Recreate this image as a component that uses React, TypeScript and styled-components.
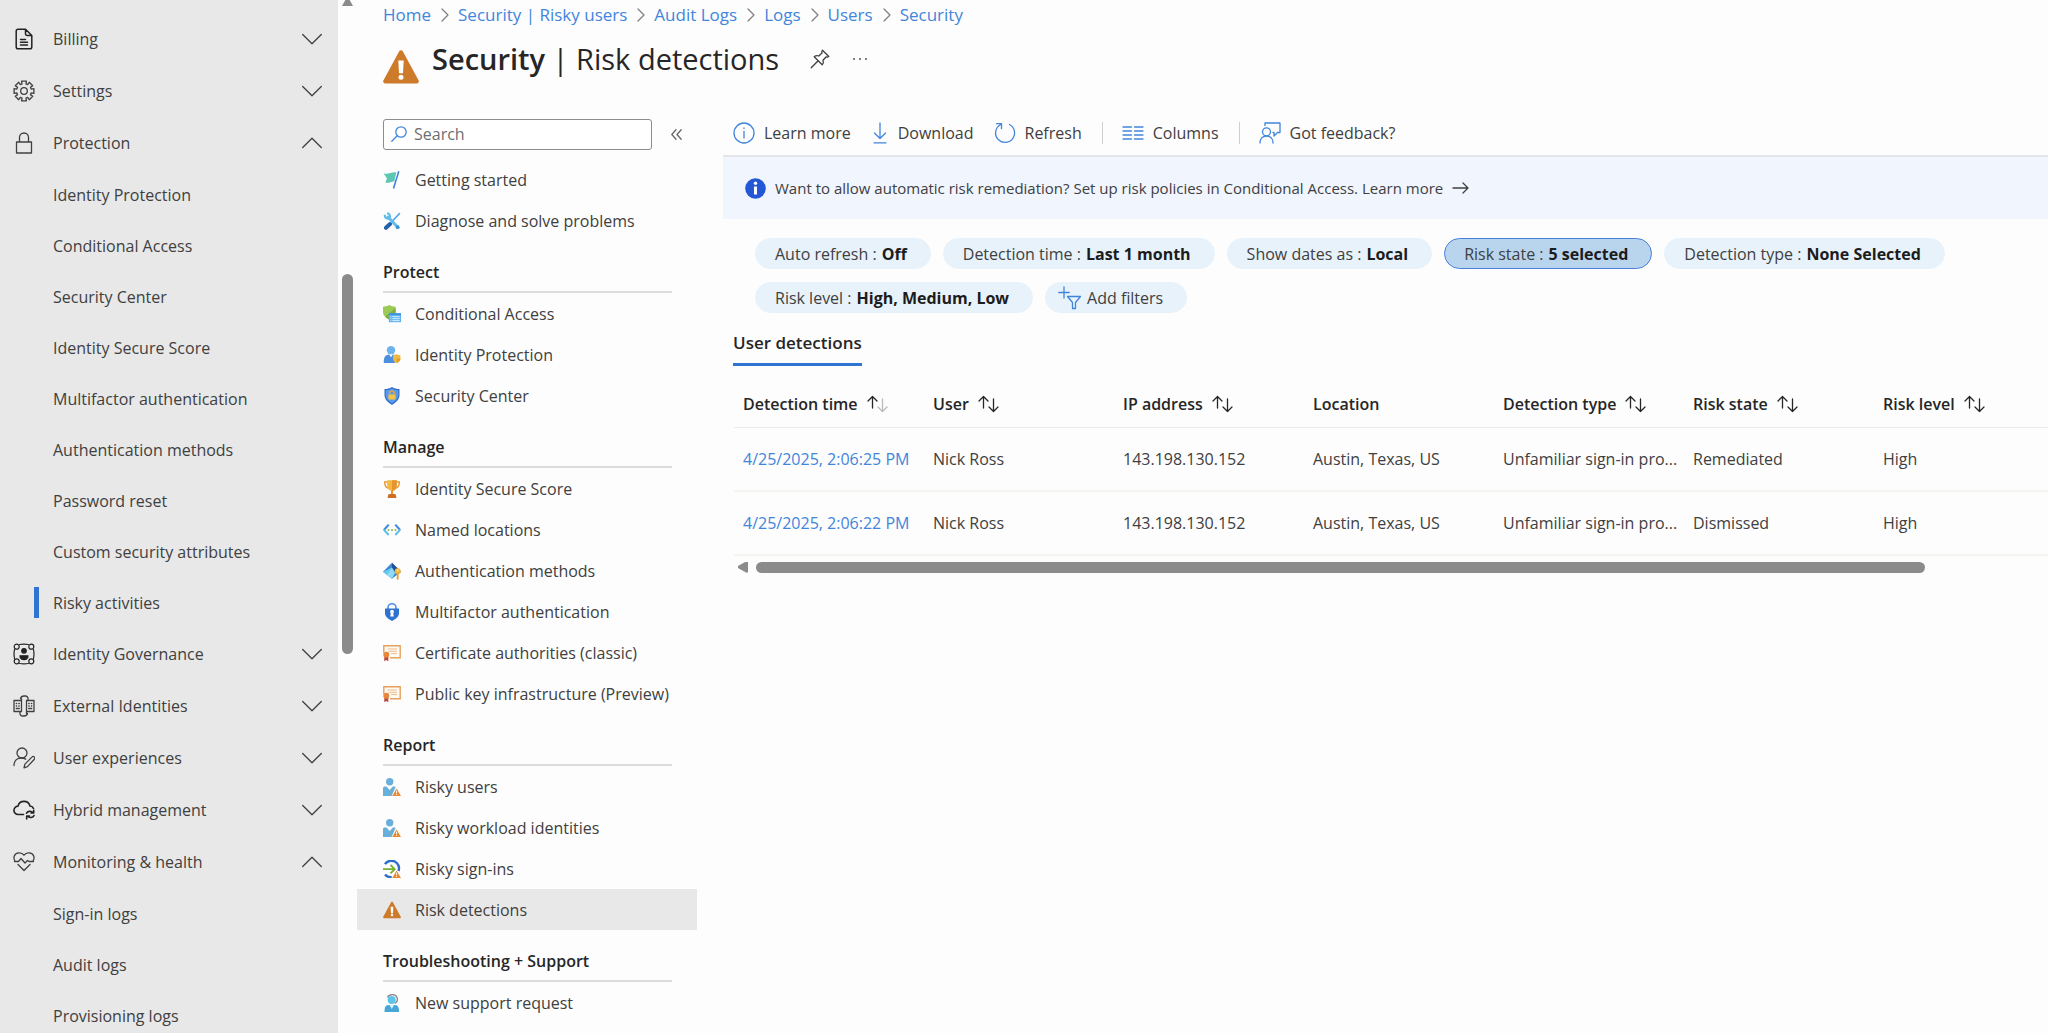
import React from 'react';
import styled, { createGlobalStyle, css } from 'styled-components';

const colors = {
  text: '#404040',
  heading: '#262626',
  link: '#4285dc',
  accent: '#2f74d0',
  rail: '#e8e8e8',
  line: '#dcdcdf',
  thumb: '#8b8b8b',
  pill: '#e7f2fb',
  pillActive: '#b9d5ee',
  notice: '#f0f5fe',
};

const GlobalStyle = createGlobalStyle`
  *, *::before, *::after { box-sizing: border-box; }
  body {
    margin: 0;
    overflow: hidden;
    background: #fdfdfd;
    color: ${colors.text};
    font-family: "Open Sans", "Noto Sans", sans-serif;
    font-size: 16px;
    line-height: 24px;
  }
  button, input { font: inherit; color: inherit; }
  ul, ol { list-style: none; margin: 0; padding: 0; }
  a { color: inherit; text-decoration: none; }
`;

const resetButton = css`
  border: 0;
  padding: 0;
  background: none;
  cursor: pointer;
`;

/* ---------- page frame ---------- */

const Page = styled.div`
  display: flex;
  height: 100vh;
  overflow: hidden;
`;

const Rail = styled.nav`
  flex: 0 0 338px;
  padding-top: 13px;
  overflow: hidden;
  background: ${colors.rail};
`;

const RailScroll = styled.div`
  flex: 0 0 19px;
  display: flex;
  flex-direction: column;
  padding-left: 4px;
  overflow: hidden;
`;

const UpArrow = styled.span`
  width: 11px;
  height: 6px;
  background: ${colors.thumb};
  clip-path: polygon(30% 0, 70% 0, 100% 100%, 0 100%);
`;

const Spacer = styled.span<{ $share: number }>`
  flex: ${(p) => p.$share};
`;

const RailThumb = styled(Spacer)`
  width: 11px;
  border-radius: 6px;
  background: ${colors.thumb};
`;

const Blade = styled.div`
  flex: 1;
  min-width: 0;
  display: flex;
  flex-direction: column;
`;

/* ---------- left rail ---------- */

const RailGroup = styled.button`
  ${resetButton}
  display: flex;
  align-items: center;
  width: 100%;
  height: 52px;
  padding: 0 16px 0 13px;
  text-align: left;
`;

const RailLabel = styled.span`
  flex: 1;
  padding-left: 18px;
`;

const RailLink = styled.a<{ $active?: boolean }>`
  display: flex;
  align-items: center;
  height: 51px;
  padding-left: 34px;

  &::before {
    content: '';
    width: 5px;
    height: 31px;
    margin-right: 14px;
    background: ${(p) => (p.$active ? colors.accent : 'transparent')};
  }
`;

/* ---------- header ---------- */

const Header = styled.header`
  padding: 3px 26px 0;
  height: 119px;
`;

const Crumbs = styled.ol`
  display: flex;
  align-items: center;
  color: ${colors.link};
  font-size: 17px;
`;

const Crumb = styled.li`
  display: flex;
  align-items: center;
`;

const TitleRow = styled.div`
  display: flex;
  align-items: center;
  margin-top: 6px;
`;

const TitleIcon = styled.span`
  display: flex;
  padding-top: 16px;
  margin-right: 13px;
`;

const Title = styled.h1`
  margin: 0 31px 0 0;
  color: ${colors.heading};
  font-size: 29px;
  line-height: 44px;
  font-weight: 400;

  strong { font-weight: 600; }
`;

const TitleActions = styled.div`
  display: flex;
  align-items: center;
  gap: 22px;
`;

const IconButton = styled.button`
  ${resetButton}
  display: flex;
  align-items: center;
`;

/* ---------- resource menu ---------- */

const Body = styled.div`
  display: flex;
  flex: 1;
  min-height: 0;
`;

const Menu = styled.nav`
  flex: 0 0 340px;
`;

const SearchRow = styled.form`
  display: flex;
  align-items: center;
  gap: 19px;
  height: 30px;
  padding: 0 15px 0 26px;
  margin-bottom: 10px;
`;

const SearchBox = styled.label`
  display: flex;
  flex: 1;
  align-items: center;
  gap: 7px;
  height: 31px;
  padding: 0 7px;
  border: 1px solid #8c8c8c;
  border-radius: 3px;
  background: #fff;
`;

const SearchInput = styled.input`
  flex: 1;
  min-width: 0;
  border: 0;
  padding: 0;
  outline: 0;
  background: none;

  &::placeholder { color: #6e6e6e; opacity: 1; }
`;

const MenuHeading = styled.h2`
  height: 52px;
  margin: 0 25px 0 26px;
  padding-top: 19px;
  border-bottom: 2px solid ${colors.line};
  color: ${colors.heading};
  font-size: 16px;
  line-height: 24px;
  font-weight: 600;
`;

const MenuLink = styled.a<{ $active?: boolean }>`
  display: flex;
  align-items: center;
  gap: 14px;
  height: 41px;
  padding-left: 26px;
  white-space: nowrap;
  background: ${(p) => (p.$active ? colors.rail : 'none')};
`;

/* ---------- work area ---------- */

const Work = styled.main`
  flex: 1;
  min-width: 0;
  padding-left: 26px;
`;

const Toolbar = styled.div`
  display: flex;
  align-items: center;
  height: 38px;
  padding: 0 0 8px 10px;
  border-bottom: 2px solid #e4e5e9;
`;

const Tool = styled.button`
  ${resetButton}
  display: flex;
  align-items: center;
  gap: 9px;
  margin-right: 20px;
`;

const ToolDivider = styled.span`
  width: 1px;
  height: 22px;
  margin-right: 19px;
  background: #cfcfcf;
`;

const Notice = styled.a`
  display: flex;
  align-items: center;
  gap: 9px;
  height: 62px;
  padding: 0 22px;
  background: ${colors.notice};
  font-size: 15px;
`;

const Filters = styled.div`
  display: flex;
  flex-wrap: wrap;
  gap: 13px 12px;
  padding: 19px 32px;
`;

const Pill = styled.button<{ $tight?: boolean; $active?: boolean }>`
  ${resetButton}
  display: flex;
  align-items: center;
  gap: 5px;
  height: 31px;
  padding: ${(p) => (p.$tight ? '0 23px 0 12px' : '0 23px 0 19px')};
  border: 1px solid ${(p) => (p.$active ? '#4a80dc' : colors.pill)};
  border-radius: 16px;
  background: ${(p) => (p.$active ? colors.pillActive : colors.pill)};
  white-space: nowrap;

  strong { color: #1c1c1c; font-weight: 700; }
`;

const Tabs = styled.div`
  display: flex;
  padding-left: 10px;
`;

const Tab = styled.button`
  ${resetButton}
  height: 34px;
  padding-bottom: 10px;
  margin-bottom: 15px;
  border-bottom: 3px solid ${colors.accent};
  color: ${colors.heading};
  font-size: 17px;
  line-height: 20px;
  font-weight: 600;
`;

const TableFrame = styled.div`
  margin-left: 11px;
  overflow: hidden;
`;

const Table = styled.table`
  width: 1330px;
  min-width: 100%;
  table-layout: fixed;
  border-collapse: collapse;
`;

const Column = styled.col`
  width: 190px;
`;

const Th = styled.th`
  height: 46px;
  padding: 0 4px 0 9px;
  border-bottom: 1px solid #ebebeb;
  color: ${colors.heading};
  font-weight: 600;
  text-align: left;
  white-space: nowrap;
`;

const SortButton = styled.button`
  ${resetButton}
  display: flex;
  align-items: center;
  gap: 9px;
`;

const Td = styled.td`
  height: 64px;
  padding: 0 4px 0 9px;
  overflow: hidden;
  border-bottom: 2px solid #f4f4f1;
  text-overflow: ellipsis;
  white-space: nowrap;
`;

const RowLink = styled.a`
  color: ${colors.link};
`;

const TableScroll = styled.div`
  display: flex;
  align-items: center;
  height: 22px;
  padding-left: 15px;
`;

const LeftArrow = styled.span`
  width: 10px;
  height: 11px;
  margin-right: 8px;
  background: ${colors.thumb};
  clip-path: polygon(0 40%, 80% 0, 100% 0, 100% 100%, 80% 100%, 0 60%);
`;

const TableThumb = styled(Spacer)`
  height: 11px;
  border-radius: 6px;
  background: ${colors.thumb};
`;

/* ---------- icons ---------- */

const Line = styled.svg`
  flex: none;
  fill: none;
  stroke: currentColor;
  stroke-width: 1.3;
  stroke-linecap: round;
  stroke-linejoin: round;
`;

const BlueLine = styled(Line)`
  color: ${colors.link};
`;

const Art = styled.svg`
  flex: none;
`;

const RailIcon = ({ children }: { children: React.ReactNode }) => (
  <Line width="22" height="22" viewBox="0 0 22 22">{children}</Line>
);

const Chevron = ({ open }: { open?: boolean }) => (
  <Line width="20" height="12" viewBox="0 0 20 12">
    <path d={open ? 'M.7 10.5 10 1.2l9.3 9.3' : 'M.7 1.5 10 10.8l9.3-9.3'} />
  </Line>
);

const gearPath = (() => {
  const pts: string[] = [];
  for (let i = 0; i < 8; i++) {
    const base = (i * Math.PI) / 4;
    [[-0.27, 7.4], [-0.24, 10.2], [0.24, 10.2], [0.27, 7.4]].forEach(([a, r]) => {
      pts.push(`${(11 + r * Math.sin(base + a)).toFixed(2)} ${(11 - r * Math.cos(base + a)).toFixed(2)}`);
    });
  }
  return `M${pts.join('L')}Z`;
})();

const railIcons: Record<string, React.ReactNode> = {
  billing: (
    <RailIcon>
      <g stroke="#222" strokeWidth="1.5">
        <path d="M12.5 1.2H5A1.8 1.8 0 0 0 3.2 3v16A1.8 1.8 0 0 0 5 20.800h12a1.800 1.800 0 0 0 1.800-1.800V7.500zM12.500 1.200v4.500a1.800 1.800 0 0 0 1.800 1.800h4.500M7.500 11.500h5M7.500 14.300h7M7.500 17h7" />
      </g>
    </RailIcon>
  ),
  settings: <RailIcon><path d={gearPath} /><circle cx="11" cy="11" r="3.300" /></RailIcon>,
  lock: <RailIcon><path d="M3.500 10h15v11h-15zM6.500 10V5.500a4.500 4.500 0 0 1 9 0V10" /></RailIcon>,
  governance: (
    <RailIcon>
      <g stroke="#222" strokeWidth="1.200">
        <path d="M6.500 1.500Q11 .6 15.500 1.500M6.500 20.500Q11 21.400 15.500 20.500M1.500 6.500Q.6 11 1.500 15.500M20.500 6.500Q21.400 11 20.500 15.500" />
        <circle cx="3.700" cy="3.700" r="2.500" /><circle cx="18.300" cy="3.700" r="2.500" />
        <circle cx="3.700" cy="18.300" r="2.500" /><circle cx="18.300" cy="18.300" r="2.500" />
        <circle cx="11" cy="7.800" r="2.300" fill="#222" />
        <path d="M7 12.800h8c0 2.600-1.600 3.800-4 3.800s-4-1.200-4-3.800z" fill="#222" />
      </g>
    </RailIcon>
  ),
  external: (
    <RailIcon>
      <path d="M1 5.500h7.500v11H1zM13.500 5.500H21v11h-7.500zM7.500 3.500C8 1.700 9.500 1 11 1h1.500a2.500 2.500 0 0 1 2.500 2.500v2M7 16.500v2A2.500 2.500 0 0 0 9.500 21H11c1.500 0 3-.7 3.500-2.500M8.500 5.500V3.800M13.500 16.500v2" />
      <path strokeWidth="1.500" d="M3.300 8.500h.3M5.900 8.500h.3M3.300 11h.3M5.900 11h.3M3.300 13.500h2.900M15.800 8.500h.3M18.400 8.500h.3M15.800 11h.3M18.400 11h.3M15.800 13.500h2.900" />
    </RailIcon>
  ),
  experiences: (
    <RailIcon>
      <circle cx="9" cy="6" r="5" />
      <path d="M1 18.500C1 14 4 11 8.500 11c1.600 0 3 .4 4.200 1.100M11 20.800l.9-3.700 7-7a1.600 1.600 0 0 1 2.500 2.200l-7 7.300z" />
    </RailIcon>
  ),
  hybrid: (
    <RailIcon>
      <g stroke="#222" strokeWidth="1.600">
        <path d="M10.500 15.500H5.300A4.200 4.200 0 0 1 5 7.100 6.200 6.200 0 0 1 17 7c1.700.2 3 1 3.500 2.500" />
        <path d="M13.500 14.200c.8-2 4.500-2.800 6.500-.4M20.700 11.300V14h-2.700M21 16.500c-.8 2.200-4.500 3-6.500.6M13.700 20v-3h2.800" />
      </g>
    </RailIcon>
  ),
  health: (
    <RailIcon>
      <path d="M11 4.200C8.500.8 2.800 1.300 1.300 5c-.7 1.700-.3 3.500.7 5M11 4.200c2.500-3.400 8.200-2.900 9.700.8.700 1.700.3 3.500-.7 5M5 13.500l6 6 6-6M1.500 10.500h4L8 7.500l4 4.500 2.500-2.500 1.500 1h4.500" />
    </RailIcon>
  ),
};

const Warning = ({ size }: { size: number }) => (
  <Art width={size} height={size} viewBox="0 0 36 36">
    <path fill="#cd7a2b" d="M16.200 2.300a2.100 2.100 0 0 1 3.600 0l15.700 29a2.200 2.200 0 0 1-1.900 3.300H2.400a2.200 2.200 0 0 1-1.900-3.300z" />
    <path fill="#fff" d="M15.300 11.500h5.400l-.7 12.800h-4z" />
    <circle cx="18" cy="28.200" r="2.500" fill="#fff" />
  </Art>
);

const Badge = () => (
  <>
    <path fill="#e88b33" d="M13.600 10.400 18 18H9.200z" />
    <path stroke="#fff" strokeWidth="1" d="M13.600 12.700v2.500M13.600 16v.9" />
  </>
);

const RiskyPerson = () => (
  <Art width="18" height="18" viewBox="0 0 18 18">
    <g fill="#6aafd8">
      <circle cx="6.700" cy="3.800" r="3.700" />
      <path d="M0 18V10.500C0 9 .8 8.600 2 8.600h1.500L6.700 12l3.200-3.400h1.600l1.200.4L8.500 18z" />
    </g>
    <Badge />
  </Art>
);

const Certificate = () => (
  <Art width="18" height="18" viewBox="0 0 18 18" fill="none">
    <path stroke="#e5a25c" strokeWidth="1.400" d="M.8 9V1.700h16.400v12H7" fill="#fffaf4" />
    <path stroke="#edb988" d="M4.500 5h9.500M5.500 7.300h8.500M8 9.600h6" />
    <path fill="#b9423a" d="M1.300 12h4v5.300l-2-1.300-2 1.300z" />
    <circle cx="3.300" cy="10.700" r="3" fill="#e8873c" />
  </Art>
);

const menuIcons: Record<string, React.ReactNode> = {
  flag: (
    <Art width="18" height="18" viewBox="0 0 18 18">
      <path fill="#5cc8b4" d="M.5 2.200c4.500 1.600 7-1.200 12.800-.8l-2 9c-3.500-.2-5 2-9 1.200L4 7.500z" />
      <path stroke="#3f7fd8" strokeWidth="1.500" d="M15.800.3 10.500 17.500" />
    </Art>
  ),
  tools: (
    <Art width="18" height="18" viewBox="0 0 18 18" fill="none" strokeLinecap="round">
      <path stroke="#4aa5e2" strokeWidth="1.600" d="M16.500 1.500 9 9.500" />
      <path stroke="#2560ab" strokeWidth="4" d="m7 12-4 3.800" />
      <path stroke="#5fbdea" strokeWidth="3" d="m5 5 9.500 10" />
      <path stroke="#5fbdea" strokeWidth="2.200" d="M1.800 3.500c0 3 2.700 3.700 4.400 2.600 1.500-1.200.8-4-1.200-4.600" />
      <circle cx="14.700" cy="15.200" r="1.900" fill="#3892d4" />
    </Art>
  ),
  conditional: (
    <Art width="18" height="18" viewBox="0 0 18 18">
      <path fill="#9bcb55" d="M6.300 0c2 1.200 4 1.700 6.300 1.700V7c0 3.500-3 6-6.300 7.600C3 13 0 10.500 0 7V1.700C2.300 1.700 4.300 1.200 6.300 0z" />
      <path fill="#7eae3d" d="M12.600 3v4c0 3.500-3 6-6.300 7.600-1.600-.8-3-1.700-4.200-2.800z" />
      <path fill="#5fb2ee" d="M5.800 8.300H18v8.900H5.800z" />
      <path fill="#3d8fdf" d="M5.800 8.300H18v1.600H5.800z" />
      <path stroke="#d5efff" strokeWidth="1" d="M7.300 11.700h1M9.300 11.700h7.400M7.300 13.700h1M9.300 13.700h7.400M7.300 15.600h1M9.300 15.600h7.400" />
    </Art>
  ),
  protection: (
    <Art width="18" height="18" viewBox="0 0 18 18">
      <circle cx="8" cy="4.300" r="4.200" fill="#6db3ee" />
      <path fill="#4c8fde" d="M1 17c-.5 0-.3-4.500 1-6.500C3 9.200 4.500 8.600 6 8.500l2 1.500 2-1.500c2 .2 3 .5 3.700 1.500L12 17z" />
      <path fill="#fff" d="m6.500 8.600 1.500 3 1.500-3z" />
      <path fill="#f3b93b" d="M13.700 8.200c1.200.7 2.300 1 3.700 1v3.300c0 2-1.700 3.600-3.700 4.700-2-1.100-3.700-2.700-3.700-4.700V9.200c1.400 0 2.500-.3 3.700-1z" />
      <path fill="#e39b2c" d="M13.700 12.500h3.700c0 2-1.700 3.600-3.700 4.700z" />
    </Art>
  ),
  center: (
    <Art width="18" height="18" viewBox="0 0 18 18">
      <path fill="#2f6fcb" d="M9 0c2.500 1.600 4.700 2 7.500 2v6.200c0 4.500-4 7.400-7.500 9.800-3.500-2.400-7.500-5.300-7.500-9.800V2C4.300 2 6.500 1.600 9 0z" />
      <path fill="#5a9ae8" d="M9 1.500c2 1.200 4 1.700 6.300 1.700v5c0 3.600-3.200 6-6.300 8.200-3.100-2.200-6.300-4.600-6.300-8.200v-5C5 3.200 7 2.700 9 1.500z" />
      <path fill="#f6c445" d="M5.500 7.500h7v5h-7z" />
      <path fill="none" stroke="#e8a838" strokeWidth="1.300" d="M6.800 7.500V6a2.200 2.200 0 0 1 4.400 0v1.500" />
    </Art>
  ),
  trophy: (
    <Art width="18" height="18" viewBox="0 0 18 18">
      <path fill="none" stroke="#e49a35" strokeWidth="1.400" d="M4.500 2H1.700c0 3.500 1 5.800 4 6.300M13.500 2h2.800c0 3.500-1 5.800-4 6.300" />
      <path fill="#f5b942" d="M4.200.3h9.600v5C13.800 8.600 12 11 9 11S4.200 8.600 4.200 5.300z" />
      <path fill="#e49530" d="M9 .3h4.800v5C13.800 8.600 12 11 9 11zM8 10.500h2V14H8z" />
      <path fill="#cf6f24" d="M5.500 14h7l1 4h-9z" />
    </Art>
  ),
  locations: (
    <Art width="18" height="18" viewBox="0 0 18 18" fill="none" strokeWidth="2">
      <path stroke="#3f83da" d="M5.700 3.700.9 9M12.300 3.700 17.100 9" />
      <path stroke="#5dbfe8" d="m.9 8.800 4.800 5.200M17.100 8.800 12.300 14" />
      <g fill="#84b93c"><circle cx="5.500" cy="9" r="1" /><circle cx="9" cy="9" r="1" /><circle cx="12.500" cy="9" r="1" /></g>
    </Art>
  ),
  methods: (
    <Art width="18" height="18" viewBox="0 0 18 18">
      <path fill="#3d86d2" d="M9 .7 18 9.800l-9 7L0 9.800z" />
      <path fill="#23509a" d="M9 .7 18 9.800l-3.500 2.700L9 6z" />
      <path fill="#67c6ec" d="M9 5.500v11.300L0 9.800z" />
      <path fill="#8cdcf5" d="M9 5.500 12 11l-3 5.800-5-4z" />
      <circle cx="14.700" cy="9.300" r="3" fill="#f3b63a" />
      <path fill="#e9a02f" d="M13.800 11.500h1.800V17l-1 1-.9-1z" />
      <circle cx="14.700" cy="8.300" r=".8" fill="#fff" />
    </Art>
  ),
  mfa: (
    <Art width="18" height="18" viewBox="0 0 18 18">
      <path fill="none" stroke="#4a8fe0" strokeWidth="1.600" d="M5 6V4.500a4 3.700 0 0 1 8 0V6" />
      <path fill="#2f73d0" d="M2 5.500h14v4.700c0 3.600-3.500 6-7 7.800-3.500-1.800-7-4.200-7-7.800z" />
      <circle cx="9" cy="8.700" r="1.900" fill="#fff" />
      <path fill="#fff" d="M8 9.500h2l.8 4H7.200z" />
    </Art>
  ),
  certificate: <Certificate />,
  person: <RiskyPerson />,
  signins: (
    <Art width="18" height="18" viewBox="0 0 18 18" fill="none">
      <path stroke="#2f6dc9" strokeWidth="2.400" d="M2 4.200A7.600 7.600 0 0 1 15.500 11M2 14.500c1.800 2.100 4 2.900 6.700 2.700" />
      <path stroke="#77b032" strokeWidth="1.800" d="M0 9.200h11M7.500 5l4.200 4.200-4.200 4.200" />
      <Badge />
    </Art>
  ),
  warning: <Warning size={18} />,
  support: (
    <Art width="18" height="18" viewBox="0 0 18 18">
      <path fill="none" stroke="#868686" strokeWidth="1.300" d="M4.500 3.500C6-.2 12.500-.4 14 3.500c.8 2 .3 4.500-2 6" />
      <circle cx="8.700" cy="6" r="4" fill="#5cc3ea" />
      <path fill="#45a7d6" d="M1.500 18c0-4 .7-7 4-7h6.500c3.300 0 4 3 4 7z" />
      <path fill="#d8f2fc" d="m6.500 11 2.300 4 2.200-4z" />
    </Art>
  ),
};

const SortArrows = ({ ascending }: { ascending?: boolean }) => (
  <Line width="21" height="18" viewBox="0 0 21 18">
    <path d="M5.500 13V1.500M1 6l4.500-4.500L10 6" />
    <path d="M15.500 4v12.500M11 12l4.500 4.500L20 12" opacity={ascending ? 0.3 : 1} />
  </Line>
);

const tools = {
  info: <BlueLine width="22" height="22" viewBox="0 0 22 22"><circle cx="11" cy="11" r="10" /><path d="M11 9.500V16M11 6v.4" /></BlueLine>,
  download: <BlueLine width="18" height="22" viewBox="0 0 18 22"><path d="M9 1v15.500M3.500 11 9 16.500l5.500-5.500M3 20.800h12" /></BlueLine>,
  refresh: <BlueLine width="22" height="22" viewBox="0 0 22 22"><path d="M15.500 2.500A9.500 9.500 0 1 1 6.300 2.700M2.500 1.700h5v5" /></BlueLine>,
  columns: <BlueLine width="22" height="22" viewBox="0 0 22 22"><path d="M1 5h8.500M1 9h8.500M1 13h8.500M1 17h8.500M12.500 5H21M12.500 9H21M12.500 13H21M12.500 17H21" /></BlueLine>,
  feedback: <BlueLine width="22" height="22" viewBox="0 0 22 22"><circle cx="7.500" cy="9.800" r="4" /><path d="M1 21c0-4 2.500-7 6.500-7s6.500 3 6.500 7M6 3.500V1h15v9.500h-2.500L15 14v-3.500h-1" /></BlueLine>,
};

/* ---------- data ---------- */

type RailEntry = { label: string; icon: string; items?: string[] };

const railEntries: RailEntry[] = [
  { label: 'Billing', icon: 'billing' },
  { label: 'Settings', icon: 'settings' },
  {
    label: 'Protection',
    icon: 'lock',
    items: ['Identity Protection', 'Conditional Access', 'Security Center', 'Identity Secure Score', 'Multifactor authentication', 'Authentication methods', 'Password reset', 'Custom security attributes', 'Risky activities'],
  },
  { label: 'Identity Governance', icon: 'governance' },
  { label: 'External Identities', icon: 'external' },
  { label: 'User experiences', icon: 'experiences' },
  { label: 'Hybrid management', icon: 'hybrid' },
  { label: 'Monitoring & health', icon: 'health', items: ['Sign-in logs', 'Audit logs', 'Provisioning logs'] },
];

const crumbs = ['Home', 'Security | Risky users', 'Audit Logs', 'Logs', 'Users', 'Security'];

const menuSections: { title?: string; items: [string, string][] }[] = [
  { items: [['Getting started', 'flag'], ['Diagnose and solve problems', 'tools']] },
  { title: 'Protect', items: [['Conditional Access', 'conditional'], ['Identity Protection', 'protection'], ['Security Center', 'center']] },
  {
    title: 'Manage',
    items: [['Identity Secure Score', 'trophy'], ['Named locations', 'locations'], ['Authentication methods', 'methods'], ['Multifactor authentication', 'mfa'], ['Certificate authorities (classic)', 'certificate'], ['Public key infrastructure (Preview)', 'certificate']],
  },
  { title: 'Report', items: [['Risky users', 'person'], ['Risky workload identities', 'person'], ['Risky sign-ins', 'signins'], ['Risk detections', 'warning']] },
  { title: 'Troubleshooting + Support', items: [['New support request', 'support']] },
];

const filters = [
  ['Auto refresh', 'Off'],
  ['Detection time', 'Last 1 month'],
  ['Show dates as', 'Local'],
  ['Risk state', '5 selected'],
  ['Detection type', 'None Selected'],
  ['Risk level', 'High, Medium, Low'],
];

const columns = ['Detection time', 'User', 'IP address', 'Location', 'Detection type', 'Risk state', 'Risk level'];

const rows = [
  ['4/25/2025, 2:06:25 PM', 'Nick Ross', '143.198.130.152', 'Austin, Texas, US', 'Unfamiliar sign-in pro...', 'Remediated', 'High'],
  ['4/25/2025, 2:06:22 PM', 'Nick Ross', '143.198.130.152', 'Austin, Texas, US', 'Unfamiliar sign-in pro...', 'Dismissed', 'High'],
];

/* ---------- parts ---------- */

const CrumbArrow = styled(Line)`
  margin: 0 9px 0 10px;
  color: #808080;
`;

const LeftRail = () => (
  <Rail>
    <ul>
      {railEntries.map((entry) => (
        <li key={entry.label}>
          <RailGroup aria-expanded={!!entry.items}>
            {railIcons[entry.icon]}
            <RailLabel>{entry.label}</RailLabel>
            <Chevron open={!!entry.items} />
          </RailGroup>
          {entry.items && (
            <ul>
              {entry.items.map((item) => (
                <li key={item}><RailLink href="#" $active={item === 'Risky activities'}>{item}</RailLink></li>
              ))}
            </ul>
          )}
        </li>
      ))}
    </ul>
  </Rail>
);

const PageHeader = () => (
  <Header>
    <Crumbs>
      {crumbs.map((crumb, i) => (
        <Crumb key={crumb}>
          {i > 0 && <CrumbArrow width="8" height="14" viewBox="0 0 8 14"><path d="m1 1 6 6-6 6" /></CrumbArrow>}
          <a href="#">{crumb}</a>
        </Crumb>
      ))}
    </Crumbs>
    <TitleRow>
      <TitleIcon><Warning size={36} /></TitleIcon>
      <Title><strong>Security</strong> | Risk detections</Title>
      <TitleActions>
        <IconButton aria-label="Pin">
          <Line width="20" height="20" viewBox="0 0 20 20"><path d="m12.500 1.200 6.300 6.300-1.500.7-1.300-.2-3 3.200c.6 1.500.3 3.300-.8 4.600l-8-8c1.300-1.100 3.100-1.400 4.600-.8l3.200-3-.2-1.300zM8.200 11.800 1.200 18.800" /></Line>
        </IconButton>
        <IconButton aria-label="More">
          <Art width="16" height="4" viewBox="0 0 16 4" fill="#555"><circle cx="2" cy="2" r="1" /><circle cx="8" cy="2" r="1" /><circle cx="14" cy="2" r="1" /></Art>
        </IconButton>
      </TitleActions>
    </TitleRow>
  </Header>
);

const ResourceMenu = () => (
  <Menu>
    <SearchRow>
      <SearchBox>
        <BlueLine width="16" height="16" viewBox="0 0 16 16"><circle cx="10" cy="6" r="5.200" /><path d="M6.200 9.800.8 15.300" /></BlueLine>
        <SearchInput type="search" placeholder="Search" aria-label="Search" />
      </SearchBox>
      <IconButton type="button" aria-label="Collapse menu">
        <Line width="11" height="11" viewBox="0 0 11 11" strokeOpacity=".8"><path d="M5 .8.8 5.500 5 10.200M10.200.8 6 5.500l4.200 4.700" /></Line>
      </IconButton>
    </SearchRow>
    {menuSections.map((section) => (
      <section key={section.title ?? 'top'}>
        {section.title && <MenuHeading>{section.title}</MenuHeading>}
        <ul>
          {section.items.map(([label, icon]) => (
            <li key={label}>
              <MenuLink href="#" $active={label === 'Risk detections'}>{menuIcons[icon]}{label}</MenuLink>
            </li>
          ))}
        </ul>
      </section>
    ))}
  </Menu>
);

export default function App() {
  return (
    <>
      <GlobalStyle />
      <Page>
        <LeftRail />
        <RailScroll aria-hidden="true">
          <UpArrow />
          <Spacer $share={268} />
          <RailThumb $share={380} />
          <Spacer $share={379} />
        </RailScroll>
        <Blade>
          <PageHeader />
          <Body>
            <ResourceMenu />
            <Work>
              <Toolbar>
                <Tool>{tools.info}Learn more</Tool>
                <Tool>{tools.download}Download</Tool>
                <Tool>{tools.refresh}Refresh</Tool>
                <ToolDivider />
                <Tool>{tools.columns}Columns</Tool>
                <ToolDivider />
                <Tool>{tools.feedback}Got feedback?</Tool>
              </Toolbar>
              <Notice href="#">
                <Art width="21" height="21" viewBox="0 0 21 21">
                  <circle cx="10.500" cy="10.500" r="10.300" fill="#2457d6" />
                  <circle cx="10.500" cy="5.300" r="1.700" fill="#fff" />
                  <path fill="#fff" d="M9 8.500h3v8H9z" />
                </Art>
                Want to allow automatic risk remediation? Set up risk policies in Conditional Access. Learn more
                <Line width="17" height="12" viewBox="0 0 17 12"><path d="M1 6h15M11 1l5 5-5 5" /></Line>
              </Notice>
              <Filters>
                {filters.map(([name, value]) => (
                  <Pill key={name} $active={name === 'Risk state'}>
                    <span>{name} :</span><strong>{value}</strong>
                  </Pill>
                ))}
                <Pill $tight>
                  <BlueLine width="24" height="24" viewBox="0 0 24 24"><path d="M6 1v11M.8 6.500h10.400M9.500 10.500h13l-5 6v6h-3v-6z" /></BlueLine>
                  Add filters
                </Pill>
              </Filters>
              <Tabs role="tablist">
                <Tab role="tab" aria-selected="true">User detections</Tab>
              </Tabs>
              <TableFrame>
                <Table>
                  <colgroup>{columns.map((c) => <Column key={c} />)}</colgroup>
                  <thead>
                    <tr>
                      {columns.map((c, i) => (
                        <Th key={c} scope="col">
                          {c === 'Location' ? c : <SortButton>{c}<SortArrows ascending={i === 0} /></SortButton>}
                        </Th>
                      ))}
                    </tr>
                  </thead>
                  <tbody>
                    {rows.map((row) => (
                      <tr key={row[0]}>
                        {row.map((cell, i) => (
                          <Td key={columns[i]}>{i === 0 ? <RowLink href="#">{cell}</RowLink> : cell}</Td>
                        ))}
                      </tr>
                    ))}
                  </tbody>
                </Table>
              </TableFrame>
              <TableScroll aria-hidden="true">
                <LeftArrow />
                <TableThumb $share={19} />
                <Spacer $share={2} />
              </TableScroll>
            </Work>
          </Body>
        </Blade>
      </Page>
    </>
  );
}
